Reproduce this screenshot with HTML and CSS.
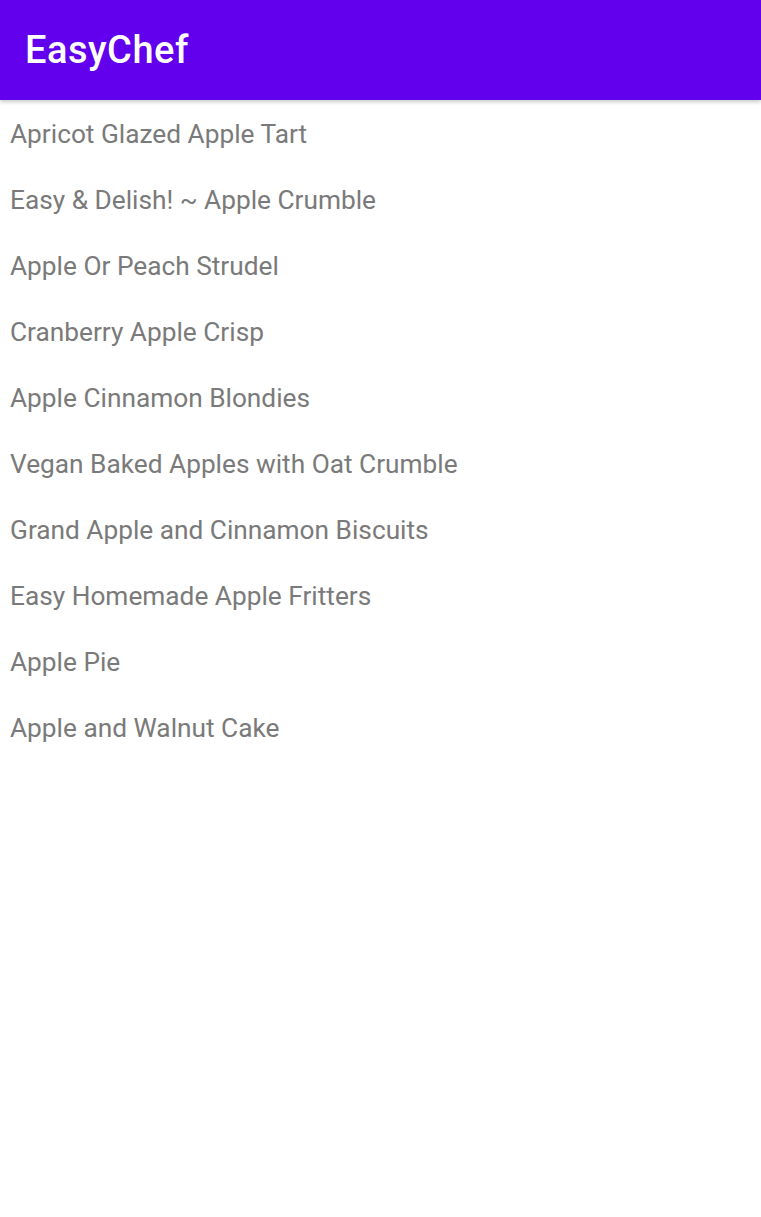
FILE: index.html
```html
<!DOCTYPE html>
<html>
<head>
<meta charset="utf-8">
<link rel="stylesheet" href="styles.css">
</head>
<body>
<header class="appbar"><h1 class="title">EasyChef</h1></header>
<ul class="list">
<li class="item">Apricot Glazed Apple Tart</li>
<li class="item">Easy &amp; Delish! ~ Apple Crumble</li>
<li class="item">Apple Or Peach Strudel</li>
<li class="item">Cranberry Apple Crisp</li>
<li class="item">Apple Cinnamon Blondies</li>
<li class="item">Vegan Baked Apples with Oat Crumble</li>
<li class="item">Grand Apple and Cinnamon Biscuits</li>
<li class="item">Easy Homemade Apple Fritters</li>
<li class="item">Apple Pie</li>
<li class="item">Apple and Walnut Cake</li>
</ul>
</body>
</html>
```
FILE: styles.css
```css
html, body {
  margin: 0;
  padding: 0;
  background: #ffffff;
  font-family: Roboto, "Noto Sans", sans-serif;
}
.appbar {
  height: 100px;
  background: #6200ee;
  display: flex;
  align-items: center;
  padding-left: 25px;
  box-shadow: 0 2px 4px rgba(0,0,0,0.22);
  position: relative;
  z-index: 1;
}
.title {
  margin: 0;
  color: #ffffff;
  font-size: 38px;
  font-weight: 500;
  letter-spacing: 0.5px;
}
.list {
  list-style: none;
  margin: 0;
  padding: 1px 0 0;
}
.item {
  height: 66px;
  display: flex;
  align-items: center;
  padding-left: 10px;
  font-size: 26.25px;
  color: #7a7a7a;
}
```
